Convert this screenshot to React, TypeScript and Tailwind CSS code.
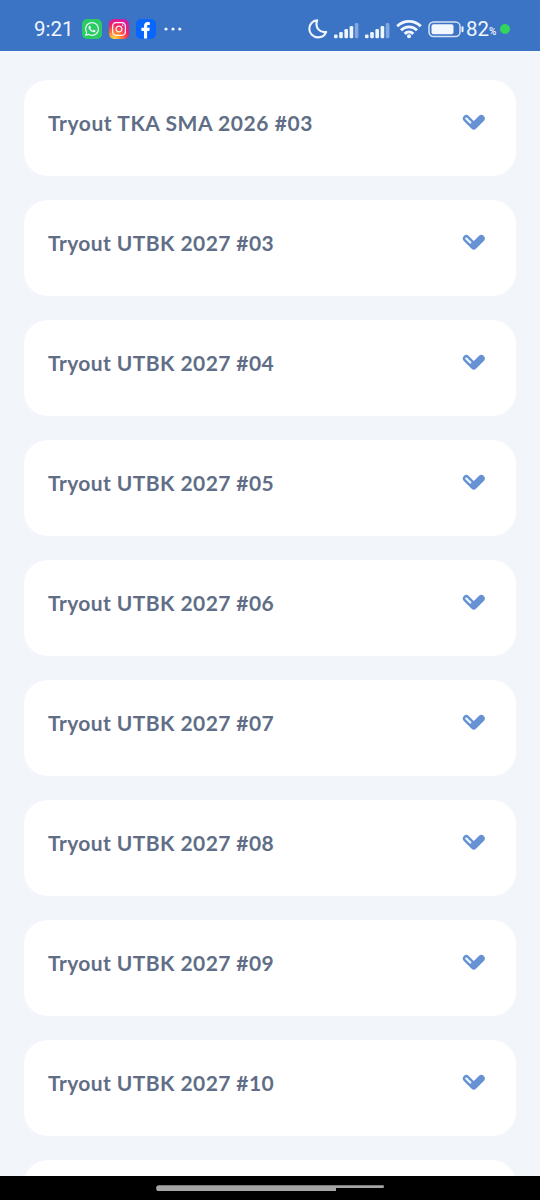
import { FaInstagram, FaWhatsapp } from "react-icons/fa";

const tryouts = [
  { title: "Tryout TKA SMA 2026 #03", tracking: "tracking-[0.57px]" },
  { title: "Tryout UTBK 2027 #03", tracking: "tracking-[0.42px]" },
  { title: "Tryout UTBK 2027 #04", tracking: "tracking-[0.42px]" },
  { title: "Tryout UTBK 2027 #05", tracking: "tracking-[0.42px]" },
  { title: "Tryout UTBK 2027 #06", tracking: "tracking-[0.42px]" },
  { title: "Tryout UTBK 2027 #07", tracking: "tracking-[0.42px]" },
  { title: "Tryout UTBK 2027 #08", tracking: "tracking-[0.42px]" },
  { title: "Tryout UTBK 2027 #09", tracking: "tracking-[0.42px]" },
  { title: "Tryout UTBK 2027 #10", tracking: "tracking-[0.42px]" },
  { title: "", tracking: "" },
];

type TryoutCardProps = {
  title: string;
  tracking: string;
};

const SignalIcon = () => (
  <svg width="25" height="17" viewBox="0 0 25 17" fill="#eef5ff">
    <rect x="0" y="12.5" width="3.6" height="3.8" rx="1.3" />
    <rect x="5.2" y="10" width="3.6" height="6.3" rx="1.3" />
    <rect x="10.4" y="7" width="3.6" height="9.3" rx="1.3" />
    <rect x="15.6" y="4" width="3.6" height="12.3" rx="1.3" />
    <rect x="20.8" y="1" width="3.6" height="15.3" rx="1.3" opacity="0.4" />
  </svg>
);

const StatusBar = () => {
  return (
    <header className="flex h-[51px] shrink-0 items-center bg-[#3b73c5] pt-[7px] pl-[34px] font-[Roboto,sans-serif] text-[#f1f6ff]">
      <span className="w-[48px] text-[20.5px] leading-none">9:21</span>
      <div className="flex gap-[7px]">
        <div className="flex size-5 items-center justify-center rounded-[5px] bg-[#2bcb63]">
          <FaWhatsapp size={16} />
        </div>
        <div className="flex size-5 items-center justify-center rounded-[5px] bg-[radial-gradient(circle_at_25%_105%,#ffd43a_8%,#ff7530_32%,#f51c68_60%,#b320ca_100%)]">
          <FaInstagram size={16} />
        </div>
        <div className="size-5 overflow-hidden rounded-[5px] bg-[#0866ff]">
          <svg width="20" height="20" viewBox="0 0 20 20" fill="white">
            <path d="M8 19.5V12H5.4V8.8H8V7.1c0-2.7 1.5-4 3.8-4 .9 0 1.6.1 2 .2v2.8h-1.3c-1.1 0-1.4.5-1.4 1.4v1.3h2.7l-.5 3.2h-2.2v7.5z" />
          </svg>
        </div>
      </div>
      <svg className="ml-[8px]" width="18" height="4" viewBox="0 0 18 4" fill="currentColor">
        <circle cx="2" cy="2" r="1.6" />
        <circle cx="9" cy="2" r="1.6" />
        <circle cx="15.8" cy="2" r="1.6" />
      </svg>
      <div className="ml-auto flex items-center pr-[30px]">
        <svg width="20" height="20" viewBox="0 0 20 20" fill="none" stroke="currentColor" strokeWidth="2.1" strokeLinejoin="round">
          <path d="M9.2 1.3C4.6 1.6 1.3 5.2 1.3 9.7c0 4.8 3.8 8.7 8.6 8.7 3.8 0 7-2.2 8.3-5.5-6 1.3-11.8-4.2-9-11.6z" />
        </svg>
        <div className="ml-[6px] flex gap-[6px] pt-[2px]">
          <SignalIcon />
          <SignalIcon />
        </div>
        <svg className="ml-[6px]" width="26" height="20" viewBox="0 0 26 20" fill="none" stroke="currentColor" strokeWidth="2.9">
          <path d="M1.2 7.3c6.6-6.6 17-6.6 23.6 0" />
          <path d="M5 11.2c4.5-4.5 11.5-4.5 16 0" />
          <path d="M8.7 14.9c2.5-2.5 6.1-2.5 8.6 0" />
          <circle cx="13" cy="17.3" r="2" fill="currentColor" stroke="none" />
        </svg>
        <svg className="ml-[6px]" width="36" height="17" viewBox="0 0 36 17" fill="none">
          <rect x="1" y="1" width="31" height="14.5" rx="4.5" stroke="currentColor" strokeWidth="1.5" opacity="0.85" />
          <rect x="3.5" y="3.3" width="22" height="10" rx="2" fill="currentColor" />
          <path d="M34.5 6.3v4" stroke="currentColor" strokeWidth="2" strokeLinecap="round" />
        </svg>
        <span className="ml-[2px] text-[20.5px] leading-none">82</span>
        <span className="w-[10px] pt-[5px] text-[10px] leading-none font-medium">%</span>
        <span className="ml-px size-[10px] rounded-full bg-[#32d45d]" />
      </div>
    </header>
  );
};

const TryoutCard = ({ title, tracking }: TryoutCardProps) => {
  return (
    <div className="flex h-24 shrink-0 items-start justify-between rounded-3xl bg-white pt-[29px] pr-[31px] pl-6">
      <h2 className={`text-[21px] leading-7 font-bold text-[#5f6e86] ${tracking}`}>{title}</h2>
      <svg className="mt-[5px]" width="23" height="18" viewBox="0 0 23 18" fill="none" strokeLinecap="round" strokeLinejoin="round">
        <path d="M4.3 4.5l7.5 7.5 7.5-7.5" stroke="#6691d2" strokeWidth="6.9" />
        <path d="M4.3 4.5l4 4" stroke="#edf4ff" strokeWidth="2.4" />
      </svg>
    </div>
  );
};

const App = () => {
  return (
    <div className="flex h-[1200px] w-[540px] flex-col bg-[#f2f6fa] font-[Lato,sans-serif]">
      <StatusBar />
      <main className="flex min-h-0 flex-1 flex-col gap-6 overflow-hidden px-6 pt-[29px]">
        {tryouts.map((tryout, index) => (
          <TryoutCard key={index} title={tryout.title} tracking={tryout.tracking} />
        ))}
      </main>
      <footer className="flex h-6 shrink-0 justify-center bg-black pt-[9px]">
        <svg width="228" height="6" viewBox="0 0 228 6" fill="#a6a6a6">
          <path d="M3 .3H227a1 1.3 0 0 1 0 2.6H180V6H3A2.85 2.85 0 0 1 3 .3z" />
        </svg>
      </footer>
    </div>
  );
};

export default App;
